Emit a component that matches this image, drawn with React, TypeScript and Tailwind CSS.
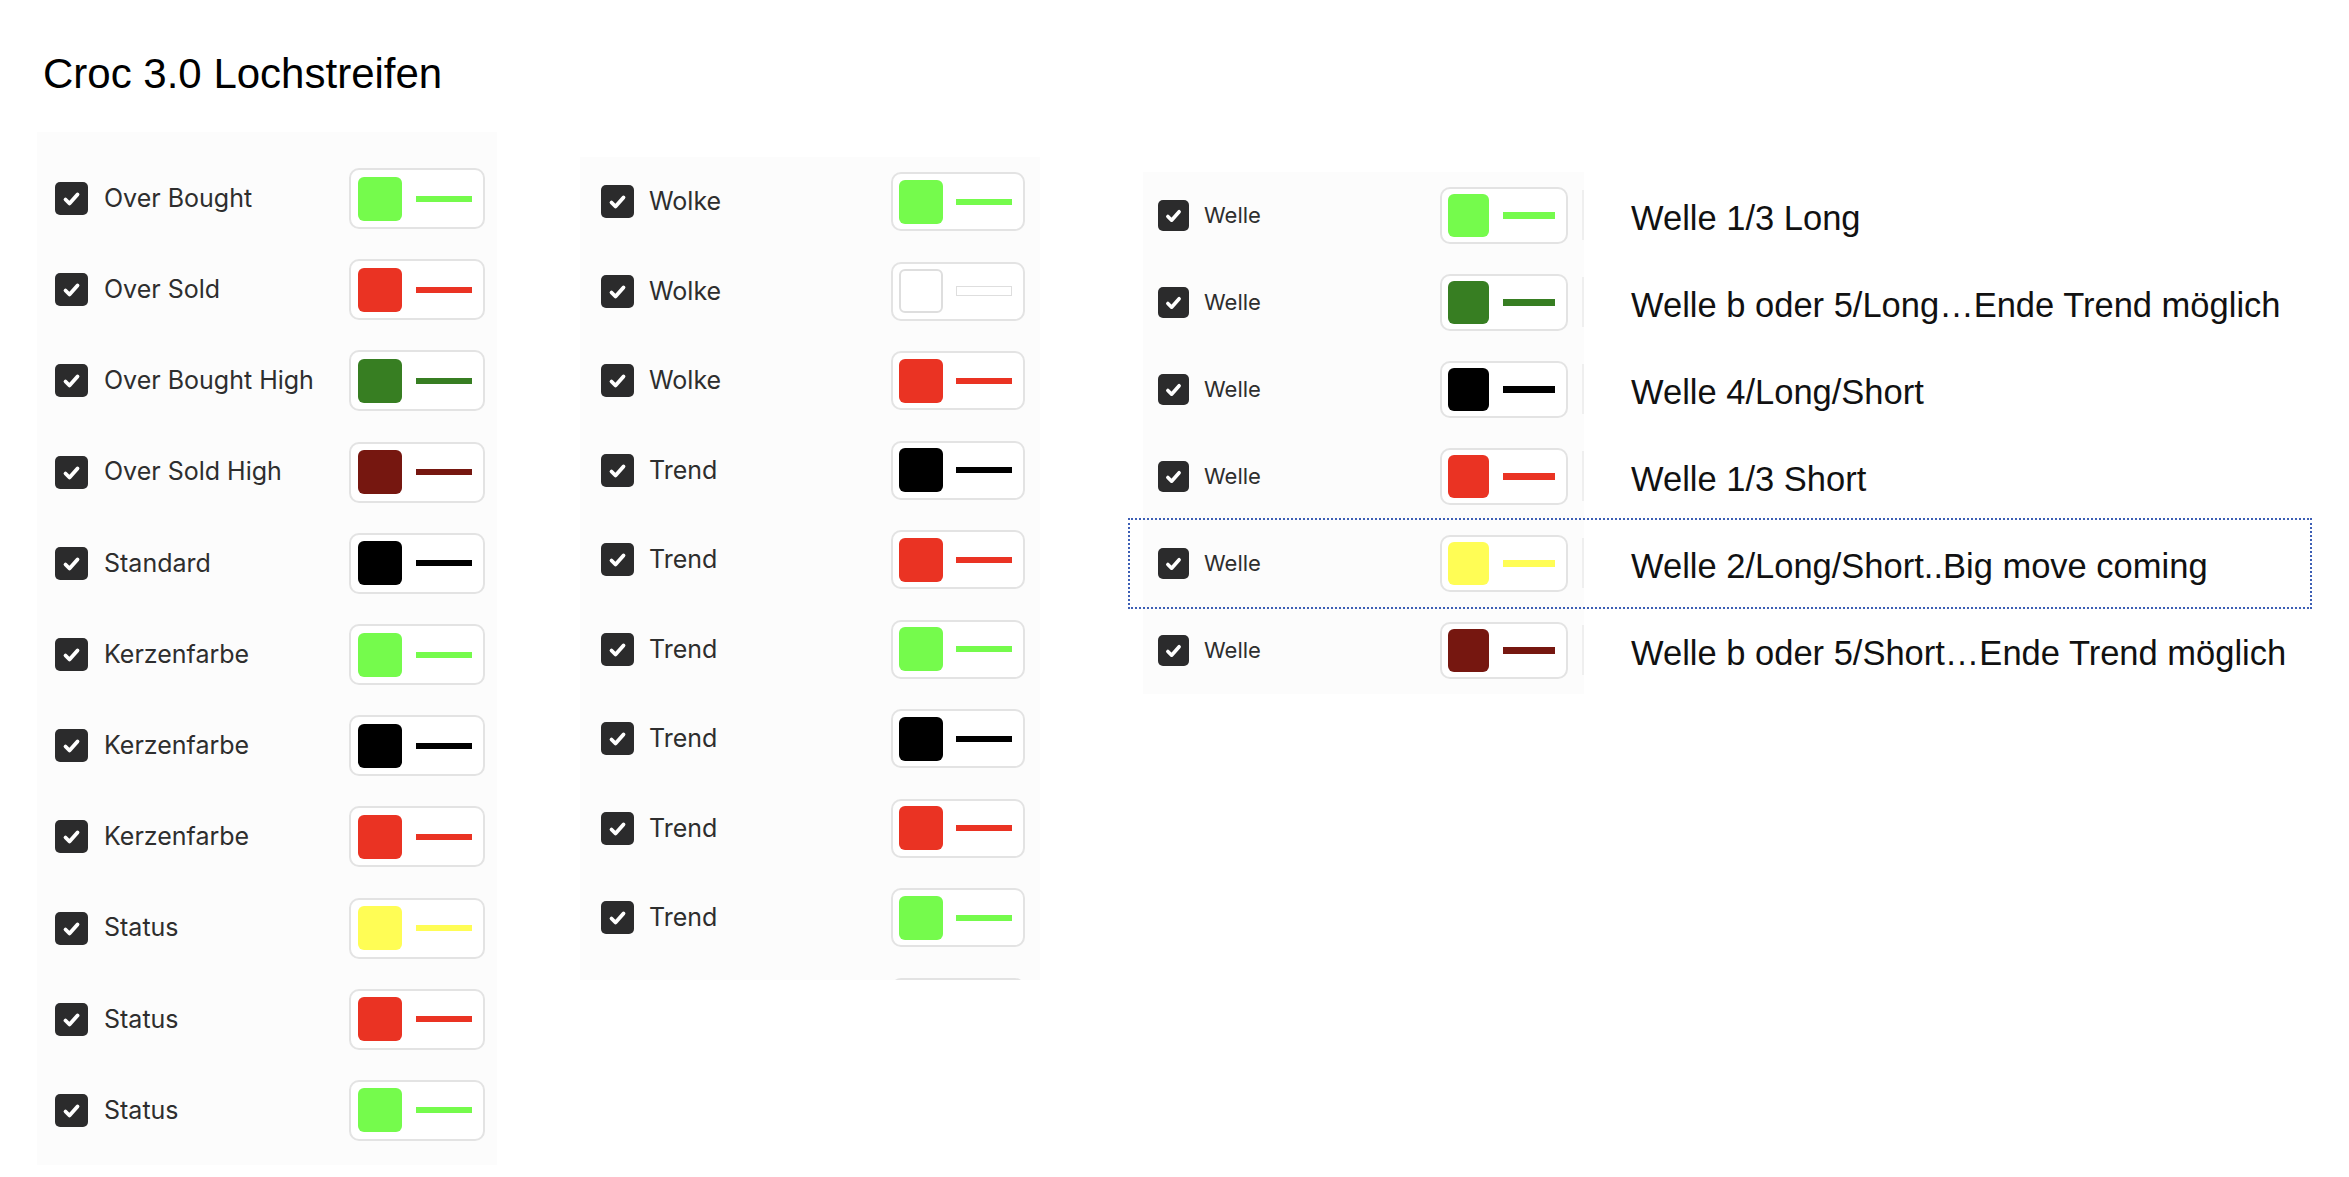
import React from "react"

type Tone = "green" | "red" | "dkgreen" | "dkred" | "black" | "yellow" | "empty"

type Item = { label: string; tone: Tone }

const toneFill: Record<Tone, string> = {
  green: "bg-[#75FB4C]",
  red: "bg-[#EA3323]",
  dkgreen: "bg-[#377E22]",
  dkred: "bg-[#761710]",
  black: "bg-[#000000]",
  yellow: "bg-[#FFFD55]",
  empty: "bg-white border-2 border-[#dedede]",
}

const lineFill: Record<Tone, string> = {
  green: "bg-[#75FB4C]",
  red: "bg-[#EA3323]",
  dkgreen: "bg-[#377E22]",
  dkred: "bg-[#761710]",
  black: "bg-[#000000]",
  yellow: "bg-[#FFFD55]",
  empty: "bg-white border-[1.5px] border-[#dedede]",
}

const leftItems: Item[] = [
  { label: "Over Bought", tone: "green" },
  { label: "Over Sold", tone: "red" },
  { label: "Over Bought High", tone: "dkgreen" },
  { label: "Over Sold High", tone: "dkred" },
  { label: "Standard", tone: "black" },
  { label: "Kerzenfarbe", tone: "green" },
  { label: "Kerzenfarbe", tone: "black" },
  { label: "Kerzenfarbe", tone: "red" },
  { label: "Status", tone: "yellow" },
  { label: "Status", tone: "red" },
  { label: "Status", tone: "green" },
]

const midItems: Item[] = [
  { label: "Wolke", tone: "green" },
  { label: "Wolke", tone: "empty" },
  { label: "Wolke", tone: "red" },
  { label: "Trend", tone: "black" },
  { label: "Trend", tone: "red" },
  { label: "Trend", tone: "green" },
  { label: "Trend", tone: "black" },
  { label: "Trend", tone: "red" },
  { label: "Trend", tone: "green" },
]

const waveItems: (Item & { note: string })[] = [
  { label: "Welle", tone: "green", note: "Welle 1/3 Long" },
  { label: "Welle", tone: "dkgreen", note: "Welle b oder 5/Long…Ende Trend möglich" },
  { label: "Welle", tone: "black", note: "Welle 4/Long/Short" },
  { label: "Welle", tone: "red", note: "Welle 1/3 Short" },
  { label: "Welle", tone: "yellow", note: "Welle 2/Long/Short..Big move coming" },
  { label: "Welle", tone: "dkred", note: "Welle b oder 5/Short…Ende Trend möglich" },
]

function Check({ className }: { className: string }) {
  return (
    <div className={`flex shrink-0 items-center justify-center rounded-[5px] bg-[#2b2b2c] ${className}`}>
      <svg viewBox="0 0 33 33" className="h-full w-full" fill="none">
        <path d="M10.5 17.5l4 4 8-9" stroke="white" strokeWidth="3.8" strokeLinecap="round" strokeLinejoin="round" />
      </svg>
    </div>
  )
}

function Swatch({ tone, size }: { tone: Tone; size: "lg" | "md" | "sm" }) {
  if (size === "lg") {
    return (
      <div className="flex h-[61px] w-[136px] shrink-0 items-center rounded-[10px] border-2 border-[#e3e3e3] bg-white pl-[7px]">
        <div className={`h-[44px] w-[44px] rounded-[6px] ${toneFill[tone]}`} />
        <div className={`ml-[14px] h-[6px] w-[56px] ${lineFill[tone]}`} />
      </div>
    )
  }
  if (size === "md") {
    return (
      <div className="flex h-[59px] w-[134px] shrink-0 items-center rounded-[10px] border-2 border-[#e3e3e3] bg-white pl-[6px]">
        <div className={`h-[44px] w-[44px] rounded-[6px] ${toneFill[tone]}`} />
        <div className={`ml-[13px] w-[56px] ${tone === "empty" ? "h-[10px]" : "h-[6px]"} ${lineFill[tone]}`} />
      </div>
    )
  }
  return (
    <div className="flex h-[57px] w-[128px] shrink-0 items-center rounded-[10px] border-2 border-[#e3e3e3] bg-white pl-[6px]">
      <div className={`h-[43px] w-[41px] rounded-[6px] ${toneFill[tone]}`} />
      <div className={`ml-[14px] h-[7px] w-[52px] ${lineFill[tone]}`} />
    </div>
  )
}

export default function App() {
  return (
    <div className="h-[1177px] w-[2349px] overflow-hidden bg-white">
      <h1 className="pl-[43px] pt-[53px] text-[42px] leading-[42px] text-black [font-family:'Liberation_Sans',Arial,sans-serif]">
        Croc 3.0 Lochstreifen
      </h1>

      <div className="mt-[37px] flex items-start pl-[37px] [font-family:Inter,'Noto_Sans',sans-serif]">
        {/* left list */}
        <div className="w-[460px] bg-[#fcfcfc] pb-[9px] pt-[21px]">
          {leftItems.map((it, i) => (
            <div key={i} className="flex h-[91.2px] items-center pl-[18px] pr-[12px]">
              <Check className="h-[33px] w-[33px]" />
              <span className="ml-[16px] flex-1 text-[25px] text-[#2e2e2e]">{it.label}</span>
              <Swatch tone={it.tone} size="lg" />
            </div>
          ))}
        </div>

        {/* middle list, scrolled area: the next swatch peeks in at the bottom */}
        <div className="ml-[83px] mt-[25px] h-[823px] w-[460px] overflow-hidden bg-[#fcfcfc]">
          {midItems.map((it, i) => (
            <div key={i} className="flex h-[89.5px] items-center pl-[21px] pr-[15px]">
              <Check className="h-[33px] w-[33px]" />
              <span className="ml-[15px] flex-1 text-[25px] text-[#2e2e2e]">{it.label}</span>
              <Swatch tone={it.tone} size="md" />
            </div>
          ))}
          <div className="flex justify-end pr-[15px] pt-[15px]">
            <div className="h-[59px] w-[134px] rounded-[10px] border-2 border-[#e3e3e3] bg-white" />
          </div>
        </div>

        {/* wave list with notes */}
        <div className="ml-[90px] mt-[39.5px] w-[1180px]">
          {waveItems.map((it, i) => (
            <div
              key={i}
              className={`flex h-[87px] items-center ${i === 4 ? "outline-2 outline-dotted outline-[#3d5fb5]" : ""}`}
            >
              <div className="ml-[13px] flex h-full w-[441px] items-center bg-[#fcfcfc] pl-[15px]">
                <Check className="h-[31px] w-[31px]" />
                <span className="ml-[15px] flex-1 text-[22px] text-[#2e2e2e]">{it.label}</span>
                <Swatch tone={it.tone} size="sm" />
                <div className="ml-[14px] h-[50px] w-[2px] bg-[#efefef]" />
              </div>
              <span className="ml-[47px] mt-[8px] whitespace-nowrap text-[34.5px] text-[#111] [font-family:'Liberation_Sans',Arial,sans-serif]">
                {it.note}
              </span>
            </div>
          ))}
        </div>
      </div>
    </div>
  )
}
